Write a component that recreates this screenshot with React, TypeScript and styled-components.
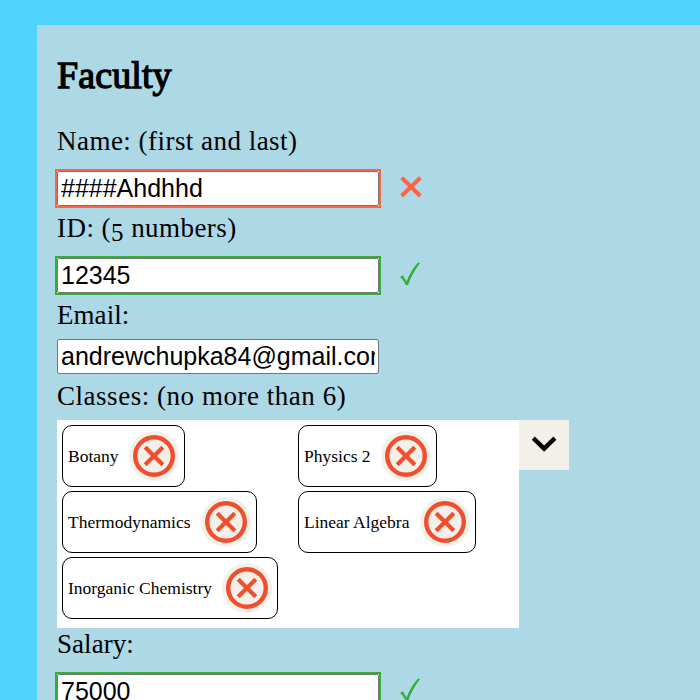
import React from "react";
import styled, { createGlobalStyle } from "styled-components";

type Status = "valid" | "invalid" | "none";
const statusColor = { valid: "#33b033", invalid: "#ff6347", none: "transparent" };

const GlobalStyle = createGlobalStyle`
  * { box-sizing: border-box; }
  html, body { margin: 0; height: 100%; overflow: hidden; background: #50d3ff; }
`;

const Page = styled.main`
  height: 700px;
  padding: 25px 0 0 37px;
  overflow: hidden;
  background: #50d3ff;
`;

const Panel = styled.form`
  height: 800px;
  padding: 25px 20px;
  background: #add8e6;
  color: #000;
`;

const Title = styled.h1`
  margin: 0;
  height: 75px;
  font: 400 38px/50px "Liberation Serif", serif;
  letter-spacing: 0.1px;
  -webkit-text-stroke: 1.3px #000;
  white-space: nowrap;
`;

const Label = styled.label<{ $spacing: number }>`
  display: block;
  height: 40px;
  font: 27px/33px "Liberation Serif", serif;
  letter-spacing: ${(p) => p.$spacing}px;
  white-space: nowrap;
`;

const OldStyleDigit = styled.span`
  font-size: 25px;
  line-height: 0;
  vertical-align: -4px;
`;

const InputRow = styled.div<{ $checked: boolean }>`
  display: flex;
  align-items: center;
  gap: 18px;
  margin: ${(p) => (p.$checked ? "4px 0 4px -2px" : "0 0 6px")};
`;

const InputFrame = styled.div<{ $status: Status }>`
  display: flex;
  border: ${(p) => (p.$status === "none" ? "0" : `2px solid ${statusColor[p.$status]}`)};
  background: ${(p) => (p.$status === "none" ? "transparent" : "#fff")};
`;

const Input = styled.input`
  width: 322px;
  height: 35px;
  margin: 0;
  padding: 1px 3px;
  border: 1px solid #767676;
  border-radius: 2px;
  outline: none;
  background: #fff;
  color: #000;
  font: 25px "Liberation Sans", Arial, sans-serif;
`;

const ClassPicker = styled.div`
  display: flex;
  align-items: flex-start;
`;

const ClassGrid = styled.div`
  display: grid;
  grid-template-columns: 232px 1fr;
  gap: 4px;
  justify-items: start;
  width: 462px;
  height: 208px;
  padding: 5px 5px 9px;
  background: #fff;
`;

const Chip = styled.div`
  display: flex;
  align-items: center;
  gap: 10px;
  height: 62px;
  padding: 5px;
  border: 1px solid #000;
  border-radius: 10px;
  font: 17.5px/22px "Liberation Serif", serif;
  white-space: nowrap;
`;

const ChipText = styled.span<{ $width: number }>`
  width: ${(p) => p.$width}px;
`;

const RoundButton = styled.button`
  display: flex;
  width: 50px;
  height: 50px;
  padding: 0;
  border: 0;
  border-radius: 50%;
  background: #f3f0e9;
`;

const OpenButton = styled(RoundButton)`
  border-radius: 0;
`;

const StatusMark = ({ status }: { status: Status }) => (
  <svg width="26" height="28" viewBox="0 0 26 28" fill="none" stroke={statusColor[status]}>
    {status === "invalid" ? (
      <path d="M2.7 2.7 21.3 21M21.3 2.7 2.7 21" strokeWidth="4" />
    ) : (
      <path
        d="M1 14.9 3.6 13.2C5 15 6.3 17 7.5 19.4 10.3 12.2 14.2 5.8 18.8 0.7L21.2 0.7C15.8 8 11.7 15 9.1 23L6.7 23C5.4 20 3.6 17 1 14.9Z"
        fill={statusColor[status]}
        stroke="none"
      />
    )}
  </svg>
);

const RemoveIcon = () => (
  <svg width="50" height="50" viewBox="0 0 50 50" fill="none" stroke="#f04e2d">
    <circle cx="25" cy="25" r="18.8" strokeWidth="4.4" />
    <path d="M16.2 16.2 33.8 33.8M33.8 16.2 16.2 33.8" strokeWidth="4.2" />
  </svg>
);

const ChevronIcon = () => (
  <svg width="50" height="50" viewBox="0 0 50 50" fill="none" stroke="#000">
    <path d="M14.3 18.2 25.1 28.6 35.9 18.2" strokeWidth="4.4" />
  </svg>
);

interface FieldProps {
  label: React.ReactNode;
  name: string;
  value: string;
  status?: Status;
  spacing: number;
}

const Field = ({ label, name, value, status = "none", spacing }: FieldProps) => (
  <>
    <Label htmlFor={name} $spacing={spacing}>
      {label}
    </Label>
    <InputRow $checked={status !== "none"}>
      <InputFrame $status={status}>
        <Input id={name} defaultValue={value} />
      </InputFrame>
      {status !== "none" && <StatusMark status={status} />}
    </InputRow>
  </>
);

const classes = [
  { name: "Botany", width: 51 },
  { name: "Physics 2", width: 67 },
  { name: "Thermodynamics", width: 123 },
  { name: "Linear Algebra", width: 106 },
  { name: "Inorganic Chemistry", width: 144 },
];

export default function App() {
  return (
    <>
      <GlobalStyle />
      <Page>
        <Panel>
          <Title>Faculty</Title>
          <Field name="name" label="Name: (first and last)" value="####Ahdhhd" status="invalid" spacing={0.47} />
          <Field
            name="id"
            label={
              <>
                ID: (<OldStyleDigit>5</OldStyleDigit> numbers)
              </>
            }
            value="12345"
            status="valid"
            spacing={0.45}
          />
          <Field name="email" label="Email:" value="andrewchupka84@gmail.com" spacing={0.05} />
          <Label $spacing={0.53}>Classes: (no more than 6)</Label>
          <ClassPicker>
            <ClassGrid>
              {classes.map(({ name, width }) => (
                <Chip key={name}>
                  <ChipText $width={width}>{name}</ChipText>
                  <RoundButton type="button" aria-label={`Remove ${name}`}>
                    <RemoveIcon />
                  </RoundButton>
                </Chip>
              ))}
            </ClassGrid>
            <OpenButton type="button" aria-label="Show classes">
              <ChevronIcon />
            </OpenButton>
          </ClassPicker>
          <Field name="salary" label="Salary:" value="75000" status="valid" spacing={0.05} />
        </Panel>
      </Page>
    </>
  );
}
